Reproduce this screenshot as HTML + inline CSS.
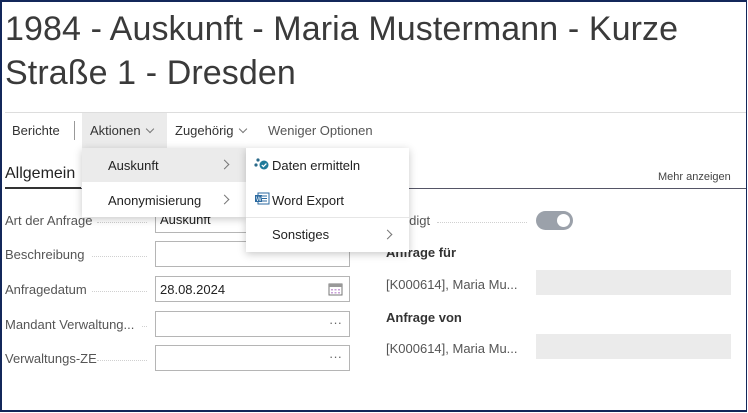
<!DOCTYPE html>
<html><head><meta charset="utf-8"><style>
*{margin:0;padding:0;box-sizing:border-box}
body{width:748px;height:413px;background:#fff;position:relative;overflow:hidden;font-family:"Liberation Sans",sans-serif;color:#333}
.a{position:absolute;white-space:nowrap}
.frame{position:absolute;left:0;top:0;width:747px;height:412px;border:2px solid #13275a;border-right-width:1.5px}
.t{font-size:34px;color:#3a3a3a;left:5px;letter-spacing:0.1px}
.tb{font-size:13px;top:123px;color:#333}
.lbl{font-size:13px;color:#555;left:5px}
.dots{position:absolute;border-bottom:1.5px dotted #d0d0d0;height:0}
.inp{position:absolute;left:155px;width:195px;height:26px;border:1px solid #b5b5b5;background:#fff;font-size:13px;padding:5px 4px;color:#222}
.menu{position:absolute;background:#fff;box-shadow:0 2px 8px rgba(0,0,0,.22)}
.mi{font-size:13px;color:#222}
.chev{position:absolute;width:7px;height:7px;border-right:1px solid #777;border-top:1px solid #777;transform:rotate(45deg)}
.dn{display:inline-block;width:6px;height:6px;border-right:1px solid #777;border-bottom:1px solid #777;transform:rotate(45deg);margin-left:6px;position:relative;top:-3px}
</style></head><body>
<div class="a t" style="top:10px">1984 - Auskunft - Maria Mustermann - Kurze</div>
<div class="a t" style="top:54px">Straße 1 - Dresden</div>
<div class="a" style="left:5px;top:112px;width:741px;height:1px;background:#ddd"></div>
<div class="a" style="left:82px;top:113px;width:85px;height:35px;background:#ebebeb"></div>
<div class="a tb" style="left:12px">Berichte</div>
<div class="a" style="left:74px;top:121px;width:1px;height:19px;background:#999"></div>
<div class="a tb" style="left:90px">Aktionen<span class="dn"></span></div>
<div class="a tb" style="left:175px">Zugehörig<span class="dn"></span></div>
<div class="a tb" style="left:268px;color:#555">Weniger Optionen</div>

<div class="a" style="left:5px;top:165px;font-size:16px;color:#222">Allgemein</div>
<div class="a" style="left:5px;top:188px;width:741px;height:1px;background:#556"></div>
<div class="a" style="left:5px;top:187px;width:76px;height:2px;background:#333"></div>
<div class="a" style="left:658px;top:171px;font-size:11px;color:#444">Mehr anzeigen</div>

<div class="a lbl" style="top:213px">Art der Anfrage</div><div class="dots" style="left:97px;top:222px;width:50px"></div>
<div class="inp" style="top:207px;border-top:none">Auskunft</div>
<div class="a lbl" style="top:247px">Beschreibung</div><div class="dots" style="left:92px;top:256px;width:55px"></div>
<div class="inp" style="top:241px"></div>
<div class="a lbl" style="top:282px">Anfragedatum</div><div class="dots" style="left:92px;top:291px;width:55px"></div>
<div class="inp" style="top:276px">28.08.2024</div>
<svg class="a" style="left:328px;top:282px" width="15" height="14" viewBox="0 0 15 14"><rect x="1" y="2" width="13" height="11" fill="none" stroke="#777"/><rect x="1" y="2" width="13" height="3" fill="#999"/><g fill="#c9a0d8"><rect x="3" y="7" width="2" height="1.5"/><rect x="6.5" y="7" width="2" height="1.5"/><rect x="10" y="7" width="2" height="1.5"/><rect x="3" y="10" width="2" height="1.5"/><rect x="6.5" y="10" width="2" height="1.5"/><rect x="10" y="10" width="2" height="1.5"/></g></svg>
<div class="a lbl" style="top:317px">Mandant Verwaltung...</div><div class="dots" style="left:142px;top:326px;width:5px"></div>
<div class="inp" style="top:311px"><span style="position:absolute;right:7px;top:3px;color:#666">···</span></div>
<div class="a lbl" style="top:351px">Verwaltungs-ZE</div><div class="dots" style="left:97px;top:360px;width:50px"></div>
<div class="inp" style="top:345px"><span style="position:absolute;right:7px;top:3px;color:#666">···</span></div>

<div class="a lbl" style="left:386px;top:213px">Erledigt</div><div class="dots" style="left:437px;top:222px;width:90px"></div>
<div class="a" style="left:536px;top:211px;width:37px;height:19px;border-radius:10px;background:#9ba1aa"></div>
<div class="a" style="left:557px;top:214px;width:13px;height:13px;border-radius:50%;background:#fff"></div>
<div class="a" style="left:386px;top:245px;font-size:13px;font-weight:bold;color:#333">Anfrage für</div>
<div class="a lbl" style="left:386px;top:277px;color:#555">[K000614], Maria Mu...</div>
<div class="a" style="left:536px;top:270px;width:195px;height:25px;background:#ebebeb"></div>
<div class="a" style="left:386px;top:310px;font-size:13px;font-weight:bold;color:#333">Anfrage von</div>
<div class="a lbl" style="left:386px;top:341px;color:#555">[K000614], Maria Mu...</div>
<div class="a" style="left:536px;top:334px;width:195px;height:25px;background:#ebebeb"></div>

<div class="menu" style="left:82px;top:148px;width:164px;height:69px">
 <div class="a" style="left:0;top:0;width:164px;height:34px;background:#ebebeb"></div>
 <div class="a mi" style="left:26px;top:10px">Auskunft</div><div class="chev" style="left:139px;top:13px"></div>
 <div class="a mi" style="left:26px;top:45px">Anonymisierung</div><div class="chev" style="left:139px;top:48px"></div>
</div>
<div class="menu" style="left:246px;top:148px;width:163px;height:104px">
 <svg class="a" style="left:8px;top:10px" width="16" height="12" viewBox="0 0 16 12"><circle cx="4" cy="2" r="1.6" fill="#2b6a8a"/><circle cx="2" cy="7" r="1.6" fill="#2b6a8a"/><circle cx="10" cy="7" r="4.5" fill="#1f7a9a"/><path d="M7.8 7l1.6 1.6 3-3" stroke="#fff" stroke-width="1.2" fill="none"/></svg>
 <div class="a mi" style="left:26px;top:10px">Daten ermitteln</div>
 <svg class="a" style="left:8px;top:44px" width="16" height="13" viewBox="0 0 16 13"><rect x="4" y="1" width="11" height="11" fill="#fff" stroke="#2b6aa0"/><path d="M8 4h5M8 6.5h5M8 9h5" stroke="#2b6aa0"/><rect x="1" y="3" width="7" height="7" fill="#2b6aa0"/><text x="2" y="9" font-size="6" fill="#fff" font-family="Liberation Sans">W</text></svg>
 <div class="a mi" style="left:26px;top:45px">Word Export</div>
 <div class="a" style="left:0;top:69px;width:163px;height:1px;background:#e6e6e6"></div>
 <div class="a mi" style="left:26px;top:79px">Sonstiges</div><div class="chev" style="left:138px;top:83px"></div>
</div>
<div class="frame"></div>
</body></html>
